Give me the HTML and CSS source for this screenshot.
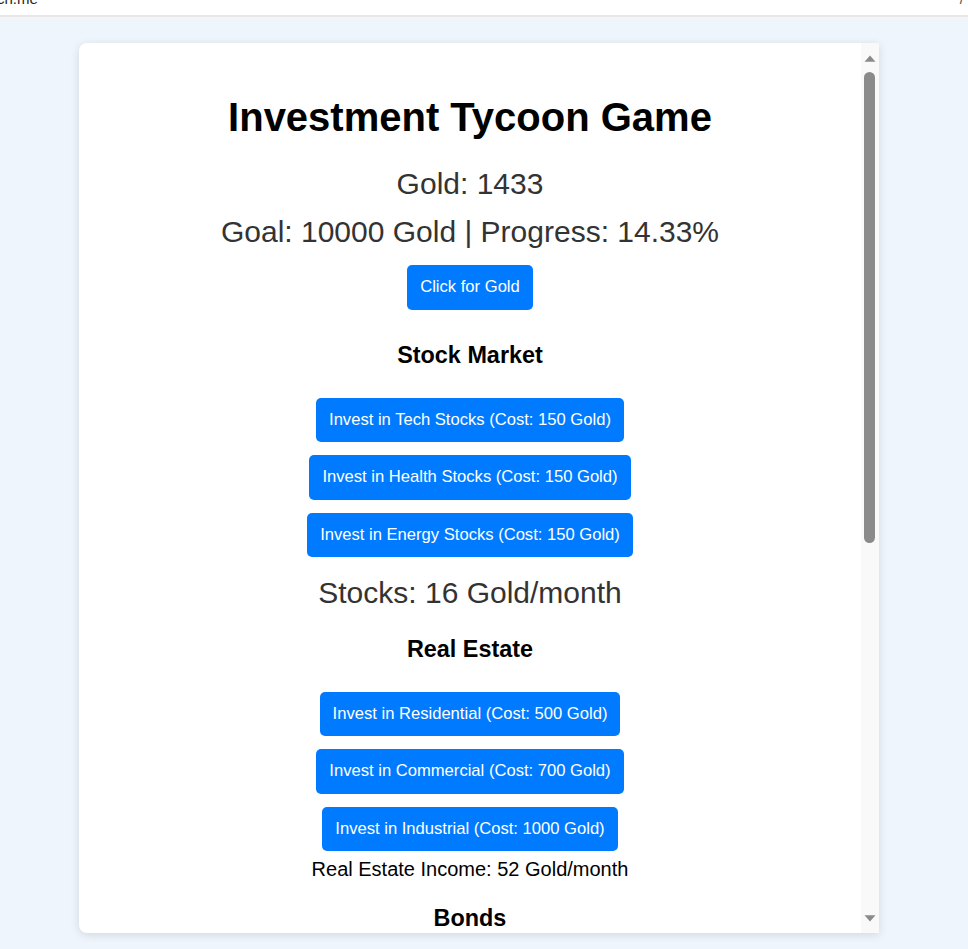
FILE: index.html
```html
<!DOCTYPE html>
<html lang="en">
<head>
<meta charset="utf-8">
<title>Investment Tycoon Game</title>
<link rel="stylesheet" href="styles.css">
</head>
<body>
<div class="chrome">
  <span class="url">ch.me</span>
  <span class="corner">/</span>
</div>
<main class="card">
  <div class="game">
    <h1 class="title">Investment Tycoon Game</h1>
    <p class="stat gold">Gold: 1433</p>
    <p class="stat goal">Goal: 10000 Gold | Progress: 14.33%</p>
    <button class="btn click">Click for Gold</button>

    <h3 class="section first">Stock Market</h3>
    <div class="btns">
      <button class="btn">Invest in Tech Stocks (Cost: 150 Gold)</button>
      <button class="btn">Invest in Health Stocks (Cost: 150 Gold)</button>
      <button class="btn">Invest in Energy Stocks (Cost: 150 Gold)</button>
    </div>
    <p class="stat stocks">Stocks: 16 Gold/month</p>

    <h3 class="section second">Real Estate</h3>
    <div class="btns">
      <button class="btn">Invest in Residential (Cost: 500 Gold)</button>
      <button class="btn">Invest in Commercial (Cost: 700 Gold)</button>
      <button class="btn">Invest in Industrial (Cost: 1000 Gold)</button>
    </div>
    <p class="income">Real Estate Income: 52 Gold/month</p>

    <h3 class="section third">Bonds</h3>
    <div class="btns">
      <button class="btn">Invest in Government Bonds (Cost: 300 Gold)</button>
      <button class="btn">Invest in Corporate Bonds (Cost: 400 Gold)</button>
      <button class="btn">Invest in Municipal Bonds (Cost: 350 Gold)</button>
    </div>
    <p class="income">Bonds Income: 0 Gold/month</p>
  </div>
  <div class="scrollbar" aria-hidden="true">
    <svg class="arrow up" width="12" height="7" viewBox="0 0 12 7"><polygon points="0.5,6.8 6,0.6 11.5,6.8" fill="#8a8a8a"/></svg>
    <div class="thumb"></div>
    <svg class="arrow down" width="12" height="7" viewBox="0 0 12 7"><polygon points="0.5,0.2 11.5,0.2 6,6.4" fill="#8a8a8a"/></svg>
  </div>
</main>
</body>
</html>
```

FILE: styles.css
```css
html, body {
  margin: 0;
  padding: 0;
}

body {
  background: #eef5fd;
  font-family: "Liberation Sans", Arial, sans-serif;
  height: 949px;
  overflow: hidden;
}

.chrome {
  height: 15px;
  background: #ffffff;
  border-bottom: 2px solid #e7e7e7;
  box-shadow: 0 2px 0 #f3f4f6;
  display: flex;
  justify-content: space-between;
  overflow: hidden;
  font-size: 15px;
  line-height: 15px;
  color: #1f1f1f;
}

.url {
  margin-top: -9px;
  margin-left: -3px;
}

.corner {
  margin-top: -9px;
  margin-right: 4px;
  color: #555;
}

.card {
  box-sizing: border-box;
  width: 800px;
  height: 890px;
  margin: 26px 0 0 79px;
  background: #ffffff;
  border-radius: 8px 0 0 8px;
  box-shadow: 0 2px 10px rgba(0, 0, 0, 0.12);
  overflow: hidden;
  display: flex;
}

.game {
  flex: 1;
  min-width: 0;
  display: flex;
  flex-direction: column;
  align-items: center;
  text-align: center;
  padding: 0 20px;
  overflow: hidden;
}

.scrollbar {
  width: 18px;
  flex: none;
  background: #f9f9f9;
  display: flex;
  flex-direction: column;
  align-items: center;
  padding: 12px 0 11px;
  box-sizing: border-box;
}

.arrow {
  display: block;
  flex: none;
}

.thumb {
  width: 11px;
  height: 471px;
  margin-top: 10px;
  margin-right: 1px;
  border-radius: 6px;
  background: #8a8a8a;
}

.arrow.down {
  margin-top: auto;
}

.title {
  margin: 51px 0 0;
  font-size: 40px;
  line-height: 46px;
  font-weight: bold;
  color: #000;
}

.stat {
  margin: 0;
  font-size: 30px;
  line-height: 35px;
  color: #333333;
}

.gold {
  margin-top: 26px;
}

.goal {
  margin-top: 13px;
}

.btn {
  font-family: "Liberation Sans", Arial, sans-serif;
  font-size: 16.6px;
  line-height: 20.5px;
  padding: 12px 13px;
  border: none;
  border-radius: 5px;
  background: #007bff;
  color: #ffffff;
  cursor: pointer;
  flex: none;
}

.click {
  margin-top: 16.4px;
}

.section {
  margin: 0;
  font-size: 23.4px;
  line-height: 27px;
  font-weight: bold;
  color: #000;
}

.section.first {
  margin-top: 31.8px;
}

.section.second {
  margin-top: 25.3px;
}

.section.third {
  margin-top: 23.6px;
}

.btns {
  display: flex;
  flex-direction: column;
  align-items: center;
  gap: 13px;
  margin-top: 29px;
}

.stocks {
  margin-top: 18.3px;
}

.income {
  margin: 7.2px 0 0;
  font-size: 20px;
  line-height: 23px;
  color: #000;
}
```
